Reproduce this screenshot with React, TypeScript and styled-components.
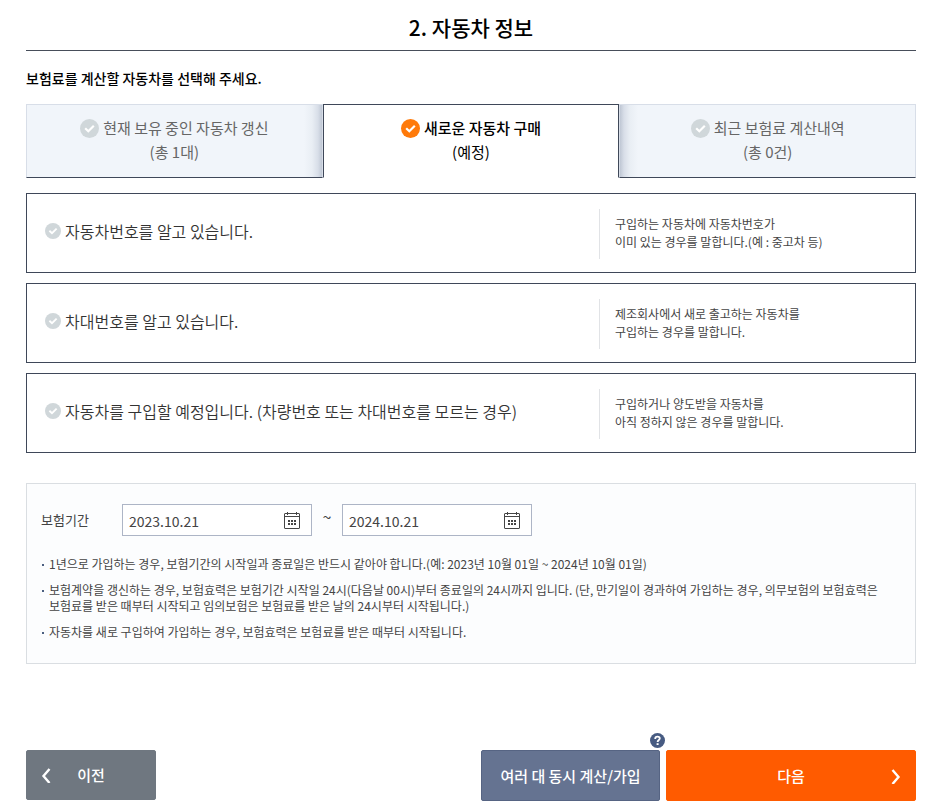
import React, { useState } from "react";
import styled, { createGlobalStyle } from "styled-components";

const GlobalStyle = createGlobalStyle`
  *, *::before, *::after { box-sizing: border-box; }
  body {
    margin: 0;
    background: #fff;
    color: #444;
    font-family: "Noto Sans CJK KR", "Noto Sans", sans-serif;
    font-size: 16px;
    word-break: keep-all;
  }
  button, input { font-family: inherit; }
`;

const Page = styled.main`
  padding: 7px 25px 9px 26px;
`;

const Title = styled.h1`
  margin: 0;
  padding-bottom: 3px;
  border-bottom: 1px solid #474e5a;
  color: #000;
  font-size: 21px;
  font-weight: 500;
  line-height: 40px;
  text-align: center;
`;

const Guide = styled.h2`
  margin: 17px 0 15px;
  color: #000;
  font-size: 14px;
  font-weight: 500;
  line-height: 21px;
`;

const Tabs = styled.div`
  display: grid;
  grid-template-columns: repeat(3, 1fr);
`;

const edgeShadow = {
  left: "linear-gradient(to left, #bfc7d4, #d8dee8 4px, #e9eef4 10px, #f1f5fa 18px)",
  right: "linear-gradient(to right, #bfc7d4, #d8dee8 4px, #e9eef4 10px, #f1f5fa 18px)",
  none: "#f1f5fa",
};

const Tab = styled.button<{ $active: boolean; $shade: keyof typeof edgeShadow }>`
  display: flex;
  flex-direction: column;
  align-items: center;
  padding: 11px 8px 13px;
  border: 1px solid ${(p) => (p.$active ? "#3f4859" : "#d8dee8")};
  border-bottom-color: ${(p) => (p.$active ? "transparent" : "#3f4859")};
  background: ${(p) => (p.$active ? "#fff" : edgeShadow[p.$shade])};
  color: ${(p) => (p.$active ? "#000" : "#666")};
  font-size: 15px;
  line-height: 24px;
  cursor: pointer;
`;

const TabName = styled.span<{ $active: boolean }>`
  display: flex;
  align-items: center;
  gap: 4px;
  font-weight: ${(p) => (p.$active ? 500 : 400)};
`;

const Choices = styled.div`
  display: grid;
  gap: 10px;
  margin-top: 15px;
`;

const Choice = styled.label`
  display: flex;
  align-items: center;
  padding: 15px 15px 13px 18px;
  border: 1px solid #3f4859;
  cursor: pointer;
`;

const ChoiceName = styled.span`
  flex: 1;
  display: flex;
  align-items: center;
  gap: 4px;
  padding-bottom: 6px;
  color: #333;
  font-size: 16px;
  font-weight: 350;
  line-height: 24px;
`;

const ChoiceMark = styled.span`
  display: grid;
  width: 16px;
  height: 16px;
  > * { grid-area: 1 / 1; }
  svg { pointer-events: none; }
`;

const Radio = styled.input`
  appearance: none;
  width: 16px;
  height: 16px;
  margin: 0;
  border-radius: 50%;
`;

const ChoiceNote = styled.span`
  flex: 0 1 301px;
  display: flex;
  align-items: center;
  min-height: 50px;
  padding: 0 0 2px 15px;
  border-left: 1px solid #e1e3e6;
  font-size: 12px;
  line-height: 18px;
  white-space: pre-line;
`;

const Panel = styled.section`
  margin-top: 30px;
  padding: 20px 14px 23px;
  border: 1px solid #dadee2;
  background: #fcfdfe;
`;

const PeriodRow = styled.div`
  display: flex;
  align-items: center;
`;

const PeriodLabel = styled.label`
  width: 81px;
  font-size: 13px;
  line-height: 20px;
`;

const Tilde = styled.span`
  width: 30px;
  padding-bottom: 8px;
  font-size: 16px;
  line-height: 20px;
  text-align: center;
`;

const DateBox = styled.div`
  display: flex;
  align-items: center;
  width: 190px;
  height: 32px;
  padding: 0 11px 0 6px;
  border: 1px solid #adb5c6;
  background: #fff;
`;

const DateInput = styled.input`
  flex: 1;
  min-width: 0;
  height: 30px;
  padding: 2px 0 0;
  border: 0;
  outline: 0;
  background: transparent;
  color: #444;
  font-size: 14px;
`;

const IconButton = styled.button`
  display: flex;
  padding: 0;
  border: 0;
  background: none;
  cursor: pointer;
`;

const Notes = styled.ul`
  display: grid;
  gap: 10px;
  margin: 20px 0 0;
  padding: 0;
  list-style: none;
  font-size: 12px;
  line-height: 16px;
`;

const Note = styled.li`
  display: flex;
  gap: 5px;
  padding-left: 1px;
  &::before {
    content: "";
    flex: none;
    width: 2px;
    height: 2px;
    margin-top: 8px;
    background: #4b5f80;
  }
`;

const Footer = styled.footer`
  display: flex;
  justify-content: space-between;
  align-items: flex-start;
  margin-top: 86px;
`;

const Actions = styled.div`
  display: flex;
  gap: 6px;
`;

const tones = {
  gray: { width: 130, height: 50, columns: "10px 1fr 10px", fill: "#6f7780", edge: "#6f7780" },
  blue: { width: 179, height: 51, columns: "0 1fr 0", fill: "#657391", edge: "#566483" },
  orange: { width: 250, height: 51, columns: "10px 1fr 10px", fill: "#ff5b00", edge: "#ff5b00" },
};

const ActionButton = styled.button<{ $tone: keyof typeof tones }>`
  display: grid;
  grid-template-columns: ${(p) => tones[p.$tone].columns};
  align-items: center;
  width: ${(p) => tones[p.$tone].width}px;
  height: ${(p) => tones[p.$tone].height}px;
  padding: 0 14px;
  border: 1px solid ${(p) => tones[p.$tone].edge};
  border-radius: 2px;
  background: ${(p) => tones[p.$tone].fill};
  color: #fff;
  font-size: 15px;
  font-weight: 500;
  line-height: 24px;
  white-space: nowrap;
  cursor: pointer;
`;

const ActionText = styled.span`
  grid-column: 2;
  justify-self: center;
`;

const HelpAnchor = styled.div`
  position: relative;
`;

const HelpButton = styled(IconButton)`
  position: absolute;
  right: -5px;
  bottom: 100%;
  margin-bottom: 2px;
`;

function CheckMark({ size, color }: { size: number; color: string }) {
  return (
    <svg width={size} height={size} viewBox="0 0 19 19" fill="none" aria-hidden="true">
      <circle cx="9.5" cy="9.5" r="9.5" fill={color} />
      <path d="M5.2 9.2 8.3 12.2 13.8 6.7" stroke="#fff" strokeWidth="2.2" />
    </svg>
  );
}

function CalendarIcon() {
  return (
    <svg width="16" height="18" viewBox="0 0 16 18" fill="none" stroke="#444" aria-hidden="true">
      <rect x="0.5" y="2.5" width="15" height="15" rx="0.5" />
      <path d="M0 5.5h16M3.5 1v3M12.5 1v3" />
      <path d="M4 10h8M4 13h8" strokeWidth="2" strokeDasharray="2 1" />
    </svg>
  );
}

function Chevron({ direction }: { direction: "left" | "right" }) {
  return (
    <svg width="10" height="16" viewBox="0 0 10 16" fill="none" stroke="#fff" strokeWidth="2.4" aria-hidden="true">
      <path d={direction === "left" ? "M8.5 2 2.5 9 8.5 16" : "M1.5 2 7.5 9 1.5 16"} />
    </svg>
  );
}

function HelpIcon() {
  return (
    <svg width="15" height="15" viewBox="0 0 15 15" fill="none" aria-hidden="true">
      <circle cx="7.5" cy="7.5" r="7.5" fill="#475b82" />
      <path d="M5.2 5.9C5.2 4.4 6.1 3.7 7.5 3.7S9.8 4.4 9.8 5.6C9.8 7 7.6 7.1 7.6 9" stroke="#fff" strokeWidth="1.8" />
      <path d="M6.6 10.2h2v1.8h-2z" fill="#fff" />
    </svg>
  );
}

const tabs = [
  { name: "현재 보유 중인 자동차 갱신", detail: "(총 1대)" },
  { name: "새로운 자동차 구매", detail: "(예정)" },
  { name: "최근 보험료 계산내역", detail: "(총 0건)" },
];

const choices = [
  {
    name: "자동차번호를 알고 있습니다.",
    note: "구입하는 자동차에 자동차번호가\n이미 있는 경우를 말합니다.(예 : 중고차 등)",
  },
  {
    name: "차대번호를 알고 있습니다.",
    note: "제조회사에서 새로 출고하는 자동차를\n구입하는 경우를 말합니다.",
  },
  {
    name: "자동차를 구입할 예정입니다. (차량번호 또는 차대번호를 모르는 경우)",
    note: "구입하거나 양도받을 자동차를\n아직 정하지 않은 경우를 말합니다.",
  },
];

const notes = [
  "1년으로 가입하는 경우, 보험기간의 시작일과 종료일은 반드시 같아야 합니다.(예: 2023년 10월 01일 ~ 2024년 10월 01일)",
  "보험계약을 갱신하는 경우, 보험효력은 보험기간 시작일 24시(다음날 00시)부터 종료일의 24시까지 입니다. (단, 만기일이 경과하여 가입하는 경우, 의무보험의 보험효력은 보험료를 받은 때부터 시작되고 임의보험은 보험료를 받은 날의 24시부터 시작됩니다.)",
  "자동차를 새로 구입하여 가입하는 경우, 보험효력은 보험료를 받은 때부터 시작됩니다.",
];

export default function App() {
  const [active, setActive] = useState(1);
  const [choice, setChoice] = useState(-1);
  const shade = (i: number) => (i === active - 1 ? "left" : i === active + 1 ? "right" : "none");

  return (
    <>
      <GlobalStyle />
      <Page>
        <Title>2. 자동차 정보</Title>
        <Guide>보험료를 계산할 자동차를 선택해 주세요.</Guide>

        <Tabs role="tablist">
          {tabs.map((tab, i) => (
            <Tab
              key={tab.name}
              type="button"
              role="tab"
              aria-selected={i === active}
              $active={i === active}
              $shade={shade(i)}
              onClick={() => setActive(i)}
            >
              <TabName $active={i === active}>
                <CheckMark size={19} color={i === active ? "#ff7a0a" : "#d0d7da"} />
                {tab.name}
              </TabName>
              <span>{tab.detail}</span>
            </Tab>
          ))}
        </Tabs>

        <Choices role="radiogroup">
          {choices.map((item, i) => (
            <Choice key={item.name}>
              <ChoiceName>
                <ChoiceMark>
                  <Radio type="radio" name="vehicle" checked={choice === i} onChange={() => setChoice(i)} />
                  <CheckMark size={16} color={choice === i ? "#ff7a0a" : "#d0d7da"} />
                </ChoiceMark>
                {item.name}
              </ChoiceName>
              <ChoiceNote>{item.note}</ChoiceNote>
            </Choice>
          ))}
        </Choices>

        <Panel>
          <PeriodRow>
            <PeriodLabel htmlFor="start">보험기간</PeriodLabel>
            <DateBox>
              <DateInput id="start" type="text" defaultValue="2023.10.21" />
              <IconButton type="button" aria-label="시작일 선택">
                <CalendarIcon />
              </IconButton>
            </DateBox>
            <Tilde>~</Tilde>
            <DateBox>
              <DateInput type="text" aria-label="종료일" defaultValue="2024.10.21" />
              <IconButton type="button" aria-label="종료일 선택">
                <CalendarIcon />
              </IconButton>
            </DateBox>
          </PeriodRow>
          <Notes>
            {notes.map((note) => (
              <Note key={note}>{note}</Note>
            ))}
          </Notes>
        </Panel>

        <Footer>
          <ActionButton type="button" $tone="gray">
            <Chevron direction="left" />
            <ActionText>이전</ActionText>
          </ActionButton>
          <Actions>
            <HelpAnchor>
              <ActionButton type="button" $tone="blue">
                <ActionText>여러 대 동시 계산/가입</ActionText>
              </ActionButton>
              <HelpButton type="button" aria-label="도움말">
                <HelpIcon />
              </HelpButton>
            </HelpAnchor>
            <ActionButton type="button" $tone="orange">
              <ActionText>다음</ActionText>
              <Chevron direction="right" />
            </ActionButton>
          </Actions>
        </Footer>
      </Page>
    </>
  );
}
